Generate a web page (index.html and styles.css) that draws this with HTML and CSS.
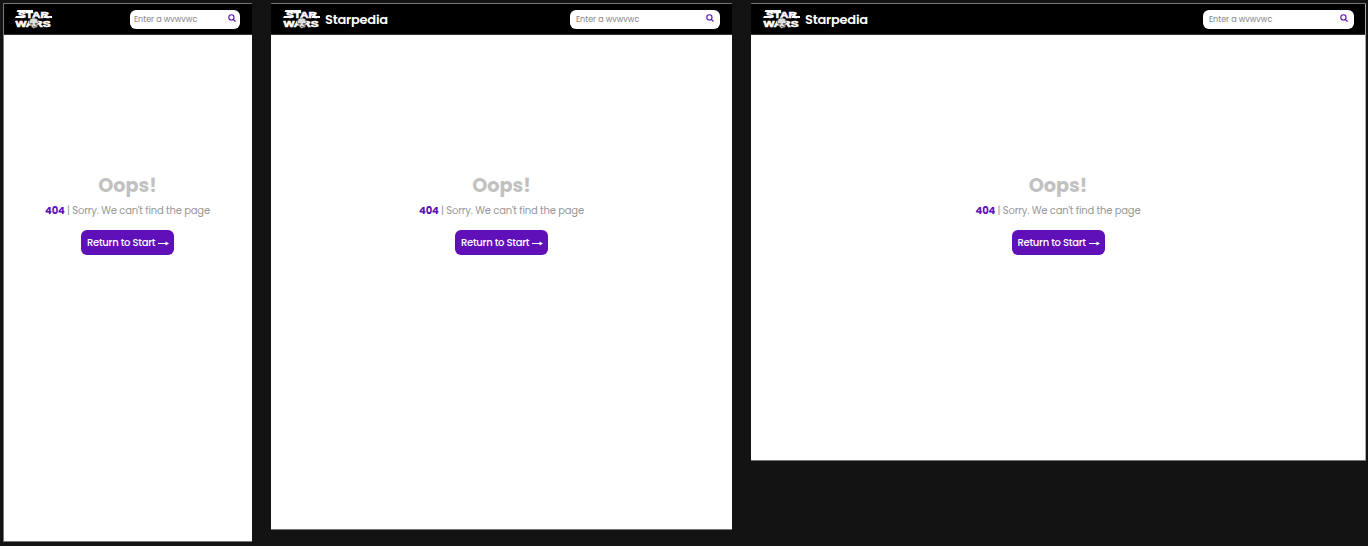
FILE: index.html
```
<!DOCTYPE html>
<html lang="en">
<head>
<meta charset="utf-8">
<title>Starpedia</title>
<link rel="stylesheet" href="styles.css">
</head>
<body>
<svg class="defs" aria-hidden="true">
  <symbol id="logo" viewBox="0 0 37 20" overflow="visible">
    <path class="logo-bar" d="M2.500 1H18v2H1.500z M1 7h8v2H0z M29 7h8v2h-8z"/>
    <text class="logo-text" x="3" y="8.500" textLength="31" lengthAdjust="spacingAndGlyphs">STAR</text>
    <text class="logo-text" x="0.500" y="18" textLength="35" lengthAdjust="spacingAndGlyphs">WARS</text>
    <path class="logo-head" d="M15 10.600c1.500-2 6-2 7.500 0l.8 3.200-1.600 1.500-.7 2.700-2.200 1.400-2.200-1.400-.7-2.700-1.600-1.500z"/>
    <path class="logo-mark" d="M15.500 14l2.500.5-.8 1.200-1.500-.7z M22 14l-2.500.5.8 1.200 1.500-.7z M17.800 17h2v.8h-2z"/>
  </symbol>
  <symbol id="search" viewBox="0 0 8 8">
    <circle cx="3.400" cy="3.400" r="2.600"/><path d="M5.300 5.300L7.500 7.500"/>
  </symbol>
  <symbol id="arrow" viewBox="0 0 11 6">
    <path class="shaft" d="M0 3.500h9"/><path class="tip" d="M7.500 1.500L11 3.500 7.500 5.500z"/>
  </symbol>
</svg>
<div class="board">
  <section class="screen mobile">
    <header class="bar">
      <svg class="logo"><use href="#logo"/></svg>
      <div class="search"><span class="hint">Enter a wvwvwc</span><svg class="glass"><use href="#search"/></svg></div>
    </header>
    <main class="message">
      <h1 class="oops">Oops!</h1>
      <p class="detail"><b class="code">404</b> | Sorry. We can't find the page</p>
      <a class="button"><span>Return to Start</span><svg class="arrow"><use href="#arrow"/></svg></a>
    </main>
  </section>
  <section class="screen tablet">
    <header class="bar">
      <svg class="logo"><use href="#logo"/></svg><span class="brand">Starpedia</span>
      <div class="search"><span class="hint">Enter a wvwvwc</span><svg class="glass"><use href="#search"/></svg></div>
    </header>
    <main class="message">
      <h1 class="oops">Oops!</h1>
      <p class="detail"><b class="code">404</b> | Sorry. We can't find the page</p>
      <a class="button"><span>Return to Start</span><svg class="arrow"><use href="#arrow"/></svg></a>
    </main>
  </section>
  <section class="screen desktop">
    <header class="bar">
      <svg class="logo"><use href="#logo"/></svg><span class="brand">Starpedia</span>
      <div class="search"><span class="hint">Enter a wvwvwc</span><svg class="glass"><use href="#search"/></svg></div>
    </header>
    <main class="message">
      <h1 class="oops">Oops!</h1>
      <p class="detail"><b class="code">404</b> | Sorry. We can't find the page</p>
      <a class="button"><span>Return to Start</span><svg class="arrow"><use href="#arrow"/></svg></a>
    </main>
  </section>
</div>
</body>
</html>
```
FILE: styles.css
```
* { box-sizing: border-box; }
body { margin: 0; background: #131313; font-family: Poppins, Inter, sans-serif; overflow: hidden; }
.defs { display: block; width: 0; height: 0; }
.board { display: flex; align-items: flex-start; gap: 19px; padding: 3px; height: 546px; }
.screen { flex: none; background: #fff; border: 1px solid #777; border-width: 1px 0; border-radius: 1px; }
.mobile { width: 249px; height: 539px; border-left: 1px solid #777; }
.tablet { width: 461px; height: 527px; }
.desktop { width: 615px; height: 458px; border-right: 1px solid #aaa; }
.bar { display: flex; align-items: center; height: 31px; padding: 0 12px; background: #000; border-bottom: 1px solid #333; }
.mobile .bar { padding-left: 11px; }
.desktop .bar { padding-right: 11px; }
.logo { flex: none; width: 37px; height: 20px; margin-top: -1px; overflow: visible; }
.logo-text { font: 900 9.4px "Liberation Sans", Arial, sans-serif; fill: #fff; stroke: #fff; stroke-width: .6px; }
.logo-bar { fill: #fff; }
.logo-head { fill: #ddd; stroke: #222; stroke-width: .5px; }
.logo-mark { fill: #444; }
.brand { margin-left: 5px; color: #fff; font-size: 13px; font-weight: 600; line-height: 20px; letter-spacing: -.25px; margin-top: 2px; }
.search { display: flex; align-items: center; justify-content: space-between; width: 150px; height: 19px; margin: 1px 0 0 auto; padding: 0 6px; background: #fff; border-radius: 6px; }
.mobile .search { width: 110px; padding: 0 4px; }
.desktop .search { width: 151px; }
.hint { color: #858585; font-size: 8px; line-height: 12px; white-space: nowrap; }
.glass { width: 8px; height: 8px; margin-top: -3px; fill: none; stroke: #5710b2; stroke-width: 1.1px; }
.message { display: flex; flex-direction: column; align-items: center; padding-top: 138px; }
.mobile .message { padding-right: 1px; }
.oops { margin: 0; color: #c1c1c1; font-size: 19.2px; line-height: 26px; font-weight: 700; }
.detail { margin: 5px 0 0; color: #979797; font-size: 10px; letter-spacing: -.18px; line-height: 14px; white-space: nowrap; }
.code { color: #6010b8; }
.button { display: flex; align-items: center; justify-content: space-between; width: 93px; height: 25px; margin-top: 12px; padding: 0 5px 0 6px; background: #6010b8; border-radius: 6px; color: #fff; font-size: 10px; font-weight: 500; letter-spacing: -.28px; white-space: nowrap; }
.arrow { width: 11px; height: 6px; }
.shaft { stroke: #fff; stroke-width: 1px; }
.tip { fill: #fff; }
```
